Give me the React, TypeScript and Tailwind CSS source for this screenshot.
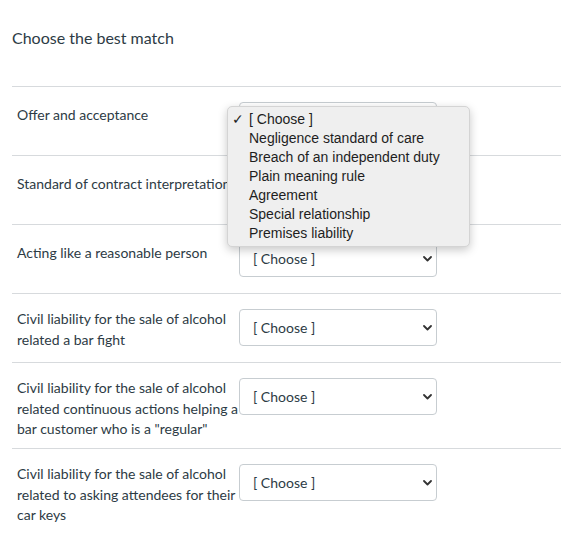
import React from "react";

const options = [
  "[ Choose ]",
  "Negligence standard of care",
  "Breach of an independent duty",
  "Plain meaning rule",
  "Agreement",
  "Special relationship",
  "Premises liability",
];

const rows = [
  { label: "Offer and acceptance", h: "h-[69px]", lp: "pt-[3px]" },
  { label: "Standard of contract interpretation", h: "h-[69px]", lp: "pt-[3px]" },
  { label: "Acting like a reasonable person", h: "h-[69px]", lp: "pt-[3px]" },
  { label: "Civil liability for the sale of alcohol related a bar fight", h: "h-[69px]", lp: "pt-0" },
  {
    label: 'Civil liability for the sale of alcohol related continuous actions helping a bar customer who is a "regular"',
    h: "h-[86px]",
    lp: "pt-0",
  },
  {
    label: "Civil liability for the sale of alcohol related to asking attendees for their car keys",
    h: "h-[90px]",
    lp: "pt-0",
  },
];

function Chevron() {
  return (
    <svg width="9" height="6" viewBox="0 0 9 6" className="shrink-0">
      <path d="M1 1l3.5 3.5L8 1" fill="none" stroke="#333" strokeWidth="1.8" strokeLinecap="round" strokeLinejoin="round" />
    </svg>
  );
}

function FakeSelect() {
  return (
    <div className="w-[198px] h-[37px] shrink-0 border border-[#c7cdd1] rounded-[4px] bg-white flex items-center justify-between pl-[13px] pr-[4px] text-[14px] text-[#2d3b45]">
      <span>[ Choose ]</span>
      <Chevron />
    </div>
  );
}

function OpenMenu() {
  return (
    <div className="absolute left-[215px] top-[19px] w-[243px] bg-[#efefef] border border-[#d4d4d4] rounded-[5px] shadow-[0_3px_10px_rgba(0,0,0,0.22)] py-[3px] pl-[4px] z-10 font-['Liberation_Sans',sans-serif] text-[14px] text-[#1e1e1e] leading-[19px]">
      {options.map((o, i) => (
        <div key={o} className="flex">
          <span className="w-[17px] shrink-0">{i === 0 ? "✓" : ""}</span>
          <span>{o}</span>
        </div>
      ))}
    </div>
  );
}

export default function App() {
  return (
    <div className="w-[561px] h-[539px] overflow-hidden bg-white font-['Lato',sans-serif] text-[#2d3b45]">
      <div className="pl-3">
        <h2 className="pt-[26px] text-[16px] leading-[24px] font-normal">Choose the best match</h2>
        <div className="mt-[36px]">
          {rows.map((r, i) => (
            <div key={r.label} className={`relative border-t border-[#d7dadd] flex items-start pt-[15px] ${r.h}`}>
              <div className={`w-[227px] shrink-0 pl-[5px] pr-0 text-[14px] leading-[20.5px] whitespace-normal ${r.lp}`}>
                {r.label}
              </div>
              <FakeSelect />
              {i === 0 && <OpenMenu />}
            </div>
          ))}
        </div>
      </div>
    </div>
  );
}
